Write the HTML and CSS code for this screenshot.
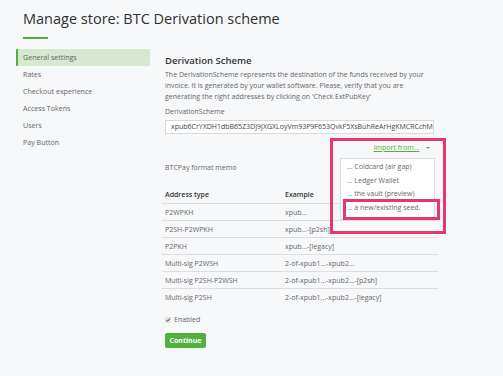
FILE: index.html
```html
<!DOCTYPE html>
<html lang="en">
<head>
    <meta charset="UTF-8">
    <meta name="viewport" content="width=device-width, initial-scale=1.0">
    <title>Manage store</title>
    <link rel="stylesheet" href="styles.css">
</head>
<body>

    <div class="page-header">
        <h2>Manage store: BTC Derivation scheme</h2>
        <div class="underline"></div>
    </div>

    <div class="layout">
        <ul class="side-nav">
            <li class="active">General settings</li>
            <li>Rates</li>
            <li>Checkout experience</li>
            <li>Access Tokens</li>
            <li>Users</li>
            <li>Pay Button</li>
        </ul>

        <div class="content">
            <h3>Derivation Scheme</h3>
            <p class="desc">
                The DerivationScheme represents the destination of the funds received by your<br>
                invoice. It is generated by your wallet software. Please, verify that you are<br>
                generating the right addresses by clicking on 'Check ExtPubKey'
            </p>

            <label class="field-label">DerivationScheme</label>
            <div class="input">xpub6CrYXDH1dbB65Z3DJ9JXGXLoyVm93P9F653QvkF5XsBuhReArHgKMCRCchM</div>

            <div class="import-row">
                <span class="import-link">Import from...</span>
                <span class="caret"></span>
                <div class="dropdown">
                    <div class="dropdown-item">... Coldcard (air gap)</div>
                    <div class="dropdown-item">... Ledger Wallet</div>
                    <div class="dropdown-item">... the vault (preview)</div>
                    <div class="dropdown-item">... a new/existing seed.</div>
                </div>
            </div>

            <div class="memo">BTCPay format memo</div>

            <table class="addr-table">
                <thead>
                    <tr><th class="col-type">Address type</th><th>Example</th></tr>
                </thead>
                <tbody>
                    <tr><td>P2WPKH</td><td>xpub...</td></tr>
                    <tr><td>P2SH-P2WPKH</td><td>xpub...-[p2sh]</td></tr>
                    <tr><td>P2PKH</td><td>xpub...-[legacy]</td></tr>
                    <tr><td>Multi-sig P2WSH</td><td>2-of-xpub1...-xpub2...</td></tr>
                    <tr><td>Multi-sig P2SH-P2WSH</td><td>2-of-xpub1...-xpub2...-[p2sh]</td></tr>
                    <tr><td>Multi-sig P2SH</td><td>2-of-xpub1...-xpub2...-[legacy]</td></tr>
                </tbody>
            </table>

            <div class="enabled">
                <span class="check">
                    <svg viewBox="0 0 6 6" width="6" height="6"><path d="M1.2 3.1 L2.5 4.4 L4.9 1.5" fill="none" stroke="#444" stroke-width="1"/></svg>
                </span>
                Enabled
            </div>

            <button class="btn-continue">Continue</button>

            <div class="highlight outer"></div>
            <div class="highlight inner"></div>
        </div>
    </div>

</body>
</html>
```

FILE: styles.css
```css
body {
    font-family: "Open Sans", "Liberation Sans", sans-serif;
    margin: 0;
    background-color: #f7f8fa;
    color: #555;
    width: 503px;
    height: 376px;
    overflow: hidden;
}
.page-header {
    padding: 9px 0 0 23px;
}
.page-header h2 {
    margin: 0;
    font-size: 14.5px;
    font-weight: 400;
    line-height: 20px;
    color: #2f2f2f;
}
.underline {
    width: 25px;
    height: 2px;
    margin-top: 8px;
    background-color: #51b13e;
}
.layout {
    display: flex;
    margin-top: 10px;
}
.side-nav {
    list-style: none;
    margin: 0 0 0 16px;
    padding: 0;
    width: 134px;
}
.side-nav li {
    height: 17px;
    line-height: 17px;
    padding-left: 7px;
    font-size: 7.1px;
    color: #666;
}
.side-nav li.active {
    background-color: #d5e9d0;
    border-left: 2px solid #51b13e;
    padding-left: 5px;
    border-radius: 1px;
}
.content {
    position: relative;
    margin-left: 15px;
    width: 273px;
    padding-top: 6px;
}
.content h3 {
    margin: 0;
    font-size: 9.5px;
    font-weight: 600;
    line-height: 12px;
    color: #333;
}
.desc {
    margin: 1.5px 0 0;
    font-size: 7px;
    line-height: 11px;
    color: #666;
}
.field-label {
    display: block;
    margin-top: 4px;
    font-size: 7px;
    line-height: 11px;
    color: #666;
}
.input {
    margin-top: 3.5px;
    width: 269px;
    height: 14px;
    box-sizing: border-box;
    padding-left: 5px;
    border: 1px solid #d8d8d8;
    background-color: white;
    font-size: 7px;
    line-height: 12px;
    color: #444;
    white-space: nowrap;
    overflow: hidden;
}
.import-row {
    position: relative;
    width: 269px;
    margin-top: 7.5px;
    text-align: right;
    font-size: 7px;
    line-height: 11px;
    color: #51b13e;
}
.import-link {
    text-decoration: underline;
}
.caret {
    display: inline-block;
    margin: 0 4px 1px 5px;
    border-top: 2.5px solid #6a9f60;
    border-left: 2px solid transparent;
    border-right: 2px solid transparent;
}
.dropdown {
    position: absolute;
    top: 16.5px;
    right: -1px;
    width: 95px;
    height: 62px;
    box-sizing: border-box;
    padding-top: 1px;
    background-color: white;
    border: 1px solid #dcdcdc;
    text-align: left;
}
.dropdown-item {
    height: 13.5px;
    line-height: 13.5px;
    padding-left: 6px;
    font-size: 7px;
    color: #666;
}
.memo {
    margin-top: 9px;
    font-size: 7px;
    line-height: 11px;
    color: #666;
}
.addr-table {
    margin: 14px 0 0 -3px;
    width: 276px;
    border-collapse: collapse;
    font-size: 7px;
    color: #666;
}
.addr-table th,
.addr-table td {
    height: 17px;
    padding: 0 0 0 3px;
    text-align: left;
    box-sizing: border-box;
}
.addr-table th {
    font-weight: 600;
    color: #333;
    border-bottom: 1px solid #dedede;
}
.addr-table td {
    border-top: 1px solid #dedede;
}
.addr-table .col-type {
    width: 120px;
}
.enabled {
    display: flex;
    align-items: center;
    margin-top: 8.5px;
    height: 11px;
    font-size: 7px;
    color: #666;
}
.check {
    display: flex;
    width: 6px;
    height: 6px;
    margin-right: 3px;
    background-color: #e2e2e2;
    border-radius: 1px;
}
.btn-continue {
    display: block;
    margin-top: 7.5px;
    width: 41px;
    height: 15px;
    padding: 0;
    border: none;
    border-radius: 2px;
    background-color: #51b13e;
    color: white;
    font-family: "Open Sans", "Liberation Sans", sans-serif;
    font-size: 7px;
    font-weight: 700;
}
.highlight {
    position: absolute;
    border: 3px solid #e8366f;
    box-sizing: border-box;
}
.highlight.outer {
    left: 165px;
    top: 89px;
    width: 116px;
    height: 96px;
}
.highlight.inner {
    left: 178px;
    top: 150px;
    width: 97px;
    height: 21px;
}
```
